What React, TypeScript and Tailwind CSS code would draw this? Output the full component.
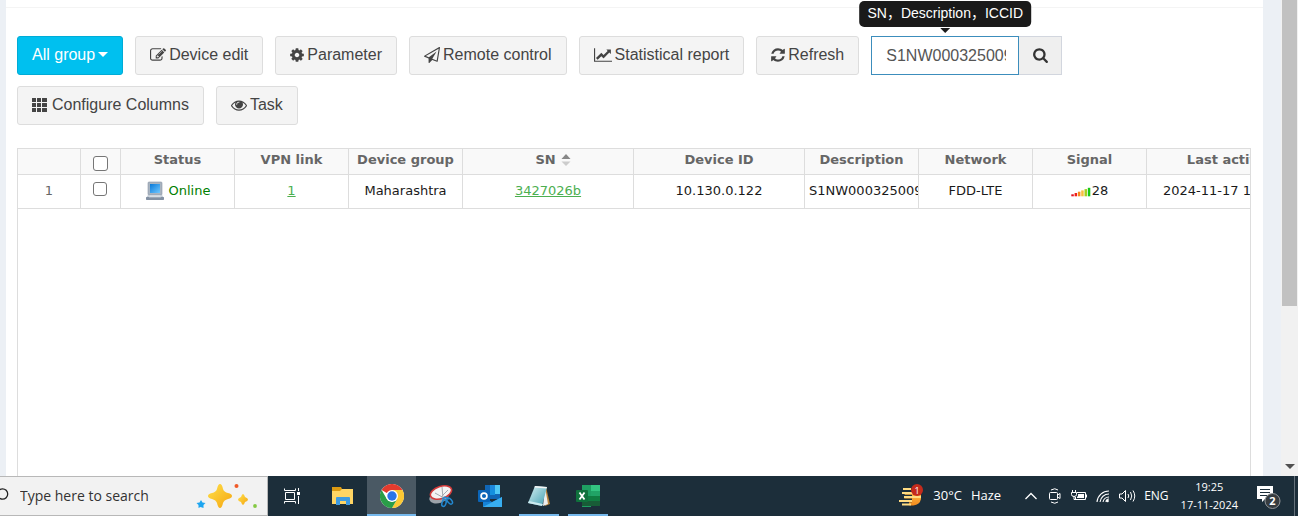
import React from 'react';

const paths = {
  edit: 'M888 1184l116-116-152-152-116 116v56h96v96h56zm440-720q-16-16-33 1l-350 350q-17 17-1 33t33-1l350-350q17-17 1-33zm80 594v190q0 119-84.5 203.5t-203.5 84.5h-832q-119 0-203.5-84.5t-84.5-203.5v-832q0-119 84.5-203.5t203.5-84.5h832q63 0 117 25 15 7 18 23 3 17-9 29l-49 49q-14 14-32 8-23-6-45-6h-832q-66 0-113 47t-47 113v832q0 66 47 113t113 47h832q66 0 113-47t47-113v-126q0-13 9-22l64-64q15-15 35-7t20 29zm-96-738l288 288-672 672h-288v-288zm444 132l-92 92-288-288 92-92q28-28 68-28t68 28l152 152q28 28 28 68t-28 68z',
  cog: 'M1152 896q0-106-75-181t-181-75-181 75-75 181 75 181 181 75 181-75 75-181zm512-109v222q0 12-8 23t-20 13l-185 28q-19 54-39 91 35 50 107 138 10 12 10 25t-9 23q-27 37-99 108t-94 71q-12 0-26-9l-138-108q-44 23-91 38-16 136-29 186-7 28-36 28h-222q-14 0-24.5-8.5t-11.5-21.5l-28-184q-49-16-90-37l-141 107q-10 9-25 9-14 0-25-11-126-114-165-168-7-10-7-23 0-12 8-23 15-21 51-66.5t54-70.5q-27-50-41-99l-183-27q-13-2-21-12.5t-8-23.5v-222q0-12 8-23t19-13l186-28q14-46 39-92-40-57-107-138-10-12-10-24 0-10 9-23 26-36 98.5-107.5t94.5-71.5q13 0 26 10l138 107q44-23 91-38 16-136 29-186 7-28 36-28h222q14 0 24.5 8.5t11.5 21.5l28 184q49 16 90 37l142-107q9-9 24-9 13 0 25 10 129 119 165 170 7 8 7 22 0 12-8 23-15 21-51 66.5t-54 70.5q26 50 41 98l183 28q13 2 21 12.5t8 23.5z',
  plane: 'M1764 11q33 24 27 64l-256 1536q-5 29-32 45-14 8-31 8-11 0-24-5l-527-215-298 327q-18 21-47 21-14 0-23-4-19-7-30-23.5t-11-36.5v-452l-472-193q-37-14-40-55-3-39 32-59l1664-960q35-21 68 2zm-342 1499l221-1323-1434 827 336 137 863-639-478 797z',
  chart: 'M2048 1536v128h-2048v-1536h128v1408h1920zm-128-1248v435q0 21-19.5 29.5t-35.5-7.5l-121-121-633 633q-10 10-23 10t-23-10l-233-233-416 416-192-192 585-585q10-10 23-10t23 10l233 233 464-464-121-121q-16-16-7.5-35.5t29.5-19.5h435q14 0 23 9t9 23z',
  refresh: 'M1639 1056q0 5-1 7-64 268-268 434.5t-478 166.5q-146 0-282.5-55t-243.5-157l-129 129q-19 19-45 19t-45-19-19-45v-448q0-26 19-45t45-19h448q26 0 45 19t19 45-19 45l-137 137q71 66 161 102t187 36q134 0 250-65t186-179q11-17 53-117 8-23 30-23h192q13 0 22.5 9.5t9.5 22.5zm25-800v448q0 26-19 45t-45 19h-448q-26 0-45-19t-19-45 19-45l138-138q-148-137-349-137-134 0-250 65t-186 179q-11 17-53 117-8 23-30 23h-199q-13 0-22.5-9.5t-9.5-22.5v-7q65-268 270-434.5t480-166.5q146 0 284 55.5t245 156.5l130-129q19-19 45-19t45 19 19 45z',
  search: 'M1216 832q0-185-131.5-316.5t-316.5-131.5-316.5 131.5-131.5 316.5 131.5 316.5 316.5 131.5 316.5-131.5 131.5-316.5zm512 832q0 52-38 90t-90 38q-54 0-90-38l-343-342q-179 124-399 124-143 0-273.5-55.5t-225-150-150-225-55.5-273.5 55.5-273.5 150-225 225-150 273.5-55.5 273.5 55.5 225 150 150 225 55.5 273.5q0 220-124 399l343 343q37 37 37 90z',
  eye: 'M1664 960q-152-236-381-353 61 104 61 225 0 185-131.5 316.5t-316.5 131.5-316.5-131.5-131.5-316.5q0-121 61-225-229 117-381 353 133 205 333.5 326.5t434.5 121.5 434.5-121.5 333.5-326.5zm-720-384q0-20-14-34t-34-14q-125 0-214.5 89.5t-89.5 214.5q0 20 14 34t34 14 34-14 14-34q0-86 61-147t147-61q20 0 34-14t14-34zm848 384q0 34-20 69-140 230-376.5 368.5t-499.5 138.5-499.5-139-376.5-368q-20-35-20-69t20-69q140-229 376.5-368t499.5-139 499.5 139 376.5 368q20 35 20 69z',
};

function Glyph({ d, box = '0 0 1792 1792', className = 'w-4' }: { d: string; box?: string; className?: string }) {
  return (
    <svg viewBox={box} className={`h-4 shrink-0 ${className}`} fill="currentColor" aria-hidden="true">
      <path d={d} />
    </svg>
  );
}

function ToolButton({ icon, children }: { icon: React.ReactNode; children: React.ReactNode }) {
  return (
    <button type="button" className="flex h-[39px] items-center gap-[3px] rounded-[3px] border border-[#ddd] bg-[#f4f4f4] px-[14px] pb-[2px] text-base text-[#444]">
      {icon}
      <span>{children}</span>
    </button>
  );
}

function Toolbar() {
  return (
    <div className="flex flex-wrap gap-x-3 gap-y-[11px] px-[11px] pt-7">
      <button type="button" className="flex h-[39px] items-center gap-[3px] rounded-[3px] border border-[#00acd6] bg-[#00c0ef] px-[14px] pb-[2px] text-base text-white">
        <span>All group</span>
        <svg viewBox="0 0 10 5" className="h-[5px] w-[10px]" fill="currentColor" aria-hidden="true"><path d="M0 0h10L5 5z" /></svg>
      </button>
      <ToolButton icon={<Glyph d={paths.edit} />}>Device edit</ToolButton>
      <ToolButton icon={<Glyph d={paths.cog} box="128 0 1536 1792" className="w-[14px]" />}>Parameter</ToolButton>
      <ToolButton icon={<Glyph d={paths.plane} />}>Remote control</ToolButton>
      <ToolButton icon={<Glyph d={paths.chart} box="0 0 2048 1792" className="w-[18px]" />}>Statistical report</ToolButton>
      <ToolButton icon={<Glyph d={paths.refresh} box="128 0 1536 1792" className="w-[14px]" />}>Refresh</ToolButton>
      <div className="relative flex h-[39px]">
        <input
          aria-label="SN, Description, ICCID"
          defaultValue="S1NW000325009"
          className="w-[148px] border border-[#3c8dbc] bg-white pr-3 pl-[14px] text-base text-[#555] outline-none"
        />
        <button type="button" aria-label="Search" className="flex w-[43px] items-center justify-center border border-l-0 border-[#d2d6de] bg-[#efefef] pb-[2px] text-[#333]">
          <Glyph d={paths.search} box="64 0 1664 1792" className="w-[15px]" />
        </button>
        <div role="tooltip" className="absolute bottom-[42px] left-[74px] flex -translate-x-1/2 flex-col items-center">
          <div className="h-[26px] rounded-[5px] bg-[#1a1a1a] px-2 text-sm leading-[25px] whitespace-nowrap text-white">SN，Description，ICCID</div>
          <svg viewBox="0 0 10 5" className="mt-px h-[5px] w-[10px]" fill="#1a1a1a" aria-hidden="true"><path d="M0 0h10L5 5z" /></svg>
        </div>
      </div>
      <ToolButton
        icon={
          <svg viewBox="0 0 17 16" className="h-4 w-[17px]" fill="currentColor" aria-hidden="true">
            {[0, 5, 10].map((y) => [0, 5, 10].map((x) => <rect key={`${x}-${y}`} x={x} y={y + 1} width={x === 10 ? 5 : 4} height="4" rx="0.3" />))}
          </svg>
        }
      >
        Configure Columns
      </ToolButton>
      <ToolButton icon={<Glyph d={paths.eye} />}>Task</ToolButton>
    </div>
  );
}

const columnWidths = [63, 40, 114, 114, 114, 171, 171, 114, 114, 114, 171];
const signalBars = ['#e01020', '#f02018', '#f58a1c', '#f8c040', '#a6d020', '#18c818'];

function Head({ children }: { children?: React.ReactNode }) {
  return <th scope="col" className="h-[26px] overflow-hidden border-r border-b border-[#ddd] p-0 align-top leading-[21px] font-bold whitespace-nowrap text-[#666]">{children}</th>;
}

function Cell({ children }: { children?: React.ReactNode }) {
  return <td className="h-[34px] overflow-hidden border-r border-b border-[#ddd] px-1 pt-0 pb-[2px] whitespace-nowrap">{children}</td>;
}

function Tick({ label, className }: { label: string; className: string }) {
  return <input type="checkbox" aria-label={label} className={`block appearance-none rounded-[3px] border border-[#767676] bg-white ${className}`} />;
}

function DeviceTable() {
  return (
    <div className="mr-3 ml-[11px] mt-[23px] min-h-0 flex-1 overflow-hidden border border-b-0 border-[#ddd]">
      <table className="w-[1300px] table-fixed border-separate border-spacing-0 text-center font-['Verdana','DejaVu_Sans',sans-serif] text-[13px] text-[#1a1a1a]">
        <colgroup>
          {columnWidths.map((width, i) => <col key={i} style={{ width }} />)}
        </colgroup>
        <thead className="bg-[#f9f9f9]">
          <tr>
            <Head />
            <Head><Tick label="Select all" className="mt-[7px] ml-3 size-[15px]" /></Head>
            <Head>Status</Head>
            <Head>VPN link</Head>
            <Head>Device group</Head>
            <Head>
              <span className="inline-flex items-center gap-[5px] pl-[10px]">
                SN
                <svg viewBox="0 0 10 13" className="h-[13px] w-[10px]" aria-hidden="true"><path d="M.5 6h9L5 1z" fill="#888" /><path d="M.5 8.500h9L5 13z" fill="#ccc" /></svg>
              </span>
            </Head>
            <Head>Device ID</Head>
            <Head>Description</Head>
            <Head>Network</Head>
            <Head>Signal</Head>
            <Head>Last activity</Head>
          </tr>
        </thead>
        <tbody>
          <tr>
            <Cell><span className="text-[#666]">1</span></Cell>
            <td className="border-r border-b border-[#ddd] p-0 align-top"><Tick label="Select device 1" className="mt-[7px] ml-3 size-[14px]" /></td>
            <Cell>
              <span className="inline-flex items-center gap-1 align-middle text-[#008000]">
                <svg viewBox="0 0 20 20" className="size-5" aria-hidden="true">
                  <defs>
                    <linearGradient id="lid" x1="0" y1="0" x2="1" y2="1"><stop offset="0" stopColor="#0878d8" /><stop offset="1" stopColor="#70c8ff" /></linearGradient>
                  </defs>
                  <rect x="3" y="1" width="14" height="13" rx="1" fill="#a9b4c0" stroke="#8995a5" strokeWidth=".6" />
                  <rect x="5" y="3" width="10" height="9" fill="url(#lid)" />
                  <path d="M3 14h14l2 3H1z" fill="#c5ced8" />
                  <rect x="1" y="16" width="18" height="3" rx=".7" fill="#8391a3" />
                  <path d="M5 15h10M4 16h12" stroke="#eef2f6" strokeWidth=".5" />
                </svg>
                Online
              </span>
            </Cell>
            <Cell><a href="#vpn" className="text-[#4caf50] underline">1</a></Cell>
            <Cell>Maharashtra</Cell>
            <Cell><a href="#device" className="text-[#4caf50] underline">3427026b</a></Cell>
            <Cell>10.130.0.122</Cell>
            <Cell>S1NW000325009</Cell>
            <Cell>FDD-LTE</Cell>
            <Cell>
              <span className="inline-flex items-center gap-px align-middle">
                <svg viewBox="0 0 20 10" className="mt-[2px] h-[10px] w-5" aria-hidden="true">
                  {signalBars.map((color, i) => <rect key={color} x={i * 3.3 + 0.3} y={7.3 - i * 1.3} width="2.5" height={2 + i * 1.3} fill={color} />)}
                </svg>
                28
              </span>
            </Cell>
            <Cell>2024-11-17 19:25:05</Cell>
          </tr>
        </tbody>
      </table>
    </div>
  );
}

function TaskApp({ label, active, open, children }: { label: string; active?: boolean; open?: boolean; children: React.ReactNode }) {
  return (
    <button type="button" aria-label={label} className={`flex h-10 w-[49px] shrink-0 flex-col items-center ${active ? 'bg-[#4a5964]' : ''}`}>
      <span className="flex h-[38px] items-center pt-[2px]">{children}</span>
      <span className={`h-[2px] ${active ? 'w-full' : 'w-10'} ${active || open ? 'bg-[#76b9ed]' : ''}`} />
    </button>
  );
}

function TaskbarApps() {
  return (
    <div className="ml-px flex">
      <TaskApp label="Task view">
        <svg viewBox="0 0 18 16" className="mr-[3px] h-4 w-[18px]" fill="none" stroke="#fff" aria-hidden="true">
          <path d="M2.5 4.500h9v7h-9zM1.500 0.500v2h11v-2M1.500 15.500v-2h11v2M15.500 0v3M15.500 8v8" />
          <rect x="14" y="4" width="3" height="3" fill="#fff" stroke="none" />
        </svg>
      </TaskApp>
      <TaskApp label="File Explorer">
        <svg viewBox="0 0 24 20" className="h-5 w-6" aria-hidden="true">
          <path d="M1 1h9l1 2h11v4H1z" fill="#dd9b12" /><path d="M1 5h8l2-2h11v15H1z" fill="#ffd564" />
          <path d="M5 19v-7q0-1 1-1h12q1 0 1 1v7h-4v-4H9v4z" fill="#3f9be0" />
        </svg>
      </TaskApp>
      <TaskApp label="Chrome" active>
        <svg viewBox="0 0 24 24" className="size-6" aria-hidden="true">
          <circle cx="12" cy="12" r="12" fill="#fff" />
          <path d="M12 12L1.600 6A12 12 0 0 1 22.400 6H12z" fill="#e33b2e" />
          <path d="M22.400 6A12 12 0 0 1 12 24l5.200-9L12 6z" fill="#fcc934" />
          <path d="M12 24A12 12 0 0 1 1.600 6l5.200 9 5.200 3 5.200-3z" fill="#2a9d48" />
          <circle cx="12" cy="12" r="6" fill="#fff" /><circle cx="12" cy="12" r="4.700" fill="#2b74e8" />
        </svg>
      </TaskApp>
      <TaskApp label="Snipping Tool">
        <svg viewBox="0 0 26 24" className="h-6 w-[26px]" fill="none" aria-hidden="true">
          <ellipse cx="11" cy="13" rx="10" ry="6" transform="rotate(-18 11 13)" fill="#9da3aa" />
          <ellipse cx="13" cy="8.500" rx="11" ry="6" transform="rotate(-18 13 8.500)" fill="#f3f3f3" stroke="#d33a3a" strokeWidth="1.500" />
          <path d="M14 3l1 11M20 6l-7 7M7 9l9 5" stroke="#a3a9af" strokeWidth="1" />
          <path d="M14 15l3-2 4 2" stroke="#2388d0" strokeWidth="1.500" />
          <ellipse cx="16" cy="19" rx="2" ry="3.500" transform="rotate(18 16 19)" stroke="#2388d0" strokeWidth="1.500" />
          <ellipse cx="21.500" cy="17.500" rx="2" ry="3.500" transform="rotate(-40 21 17)" stroke="#2388d0" strokeWidth="1.500" />
        </svg>
      </TaskApp>
      <TaskApp label="Outlook">
        <svg viewBox="0 0 24 22" className="h-[22px] w-6" aria-hidden="true">
          <path d="M7 0h15v14H7z" fill="#1066b5" /><path d="M12 0h5v5h-5z" fill="#1c88dc" /><path d="M17 0h5v9h-5z" fill="#4fc8f5" /><path d="M12 5h5v5h-5z" fill="#1490df" />
          <path d="M5 12l9 5 10-5v10H5z" fill="#1683d8" /><path d="M5 22l19-10v10z" fill="#38aef0" /><rect y="5" width="12" height="12" rx="1" fill="#0a65b8" />
          <circle cx="6" cy="11" r="2.900" fill="none" stroke="#fff" strokeWidth="1.700" />
        </svg>
      </TaskApp>
      <TaskApp label="Notepad" open>
        <svg viewBox="0 0 24 24" className="size-6" aria-hidden="true">
          <defs><linearGradient id="note" x1="0" y1="0" x2="1" y2="1"><stop stopColor="#d9f1f4" /><stop offset="1" stopColor="#3e9eb0" /></linearGradient></defs>
          <path d="M19 3l4 17-5 2z" fill="#b8843c" /><path d="M18 3l3 17-5 2z" fill="#eee" /><path d="M8 2l12 1-5 19-14-3z" fill="url(#note)" /><path d="M8 2l12 1-.5 1.500L7.400 3.500z" fill="#f4f4f4" />
          <path d="M1 19l14 3 1-2L2 17z" fill="#cbeaf0" />
        </svg>
      </TaskApp>
      <TaskApp label="Excel" open>
        <svg viewBox="0 0 24 22" className="h-[22px] w-6" aria-hidden="true">
          <path d="M6 0h9v22H6z" fill="#1e9e62" /><path d="M15 0h9v6h-9z" fill="#33c481" /><path d="M15 6h9v5h-9z" fill="#21a366" /><path d="M6 11h18v5H6z" fill="#107c41" /><path d="M6 16h18v5H6z" fill="#185c37" />
          <rect y="5" width="12" height="12" rx="1" fill="#0f713c" /><path d="M3.500 7.500l5 7M8.500 7.500l-5 7" stroke="#fff" strokeWidth="1.800" />
        </svg>
      </TaskApp>
    </div>
  );
}

function Tray() {
  return (
    <div className="ml-auto flex items-center text-white">
      <button type="button" className="mr-[23px] flex items-center gap-[9px] text-[13px] whitespace-nowrap">
        <svg viewBox="0 0 26 26" className="size-[26px]" aria-hidden="true">
          <defs><linearGradient id="haze" x1="0" y1="0" x2="0" y2="1"><stop stopColor="#ffc04a" /><stop offset="1" stopColor="#f28a1c" /></linearGradient></defs>
          <path d="M7 8h16v8a9 8 0 0 1-17 2z" fill="url(#haze)" />
          <path d="M9 6h3M4 9h13M5 13.500h9M1 17.500h13M5 21h6" stroke="#1c2e3a" strokeWidth="3.600" />
          <path d="M5 6h8M4 10h13M6 14h17M1 18h13M4 21.500h9" stroke="#ffdc82" strokeWidth="1.800" />
          <circle cx="19" cy="7" r="6" fill="#c42b1c" />
          <text x="19" y="10.500" textAnchor="middle" fontSize="9" fill="#fff">1</text>
        </svg>
        <span>30°C</span>
        <span>Haze</span>
      </button>
      <div className="flex items-center gap-2">
        <svg viewBox="0 0 14 16" className="mr-[2px] h-4 w-[14px]" fill="none" stroke="#fff" strokeWidth="1.300" aria-label="Show hidden icons"><path d="M1.500 11L7 5.500 12.500 11" /></svg>
        <svg viewBox="0 0 14 16" className="h-4 w-[14px]" fill="none" stroke="#fff" aria-label="Camera"><rect x="1.500" y="4.500" width="8" height="7" rx="1" /><path d="M9.500 7l2.500-1.500v5l-2.500-1.500M3 2Q7-.5 10 2M3 14q4 2.500 7 0" /></svg>
        <svg viewBox="0 0 17 16" className="h-4 w-[17px]" fill="none" stroke="#fff" aria-label="Battery"><path d="M2.500 2v3M5.500 2v3M1.500 4.500h5v2q0 2-2.500 2t-2.500-2zM4 8v3.500h3" /><path d="M7 4.500h8.500v7H5.500V9M16.500 6.500v3" /><path d="M8 6h6v4H7V8.500h1z" fill="#fff" stroke="none" /></svg>
        <svg viewBox="0 0 16 16" className="h-4 w-4" fill="none" stroke="#fff" strokeWidth="1.100" aria-label="Wireless"><path d="M2 14A12 12 0 0 1 14 3M5 14a9 9 0 0 1 9-8M8 14a6 6 0 0 1 6-5M11 14a3 3 0 0 1 3-3" /><circle cx="12.500" cy="13" r="1.300" fill="#fff" stroke="none" /></svg>
        <svg viewBox="0 0 17 16" className="h-4 w-[17px]" fill="none" stroke="#fff" aria-label="Volume"><path d="M.5 6h2.500l3.500-3.500v11L3 10H.5zM9 6q1.500 2 0 4M11.500 4q2.500 4 0 8M14 2.500q3.500 5.500 0 11" /></svg>
        <span className="text-[12px]">ENG</span>
      </div>
      <time className="ml-3 text-center text-[11px] leading-[18px] whitespace-nowrap">
        <span className="block">19:25</span>
        <span className="block">17-11-2024</span>
      </time>
      <button type="button" aria-label="Notifications" className="mr-3 ml-[18px]">
        <svg viewBox="0 0 26 26" className="size-[26px]" aria-hidden="true">
          <path d="M1 3h16v13H9l-3 3v-3H1z" fill="#fff" /><path d="M4 6.500h10M4 9.500h10M4 12.500h7" stroke="#1c2e3a" />
          <circle cx="16.500" cy="18" r="7.500" fill="#363c40" stroke="#929699" />
          <text x="16.500" y="22" textAnchor="middle" fontSize="11" fontWeight="bold" fill="#fff">2</text>
        </svg>
      </button>
      <span className="mr-[3px] h-10 w-px bg-[#65717a]" />
    </div>
  );
}

function Taskbar() {
  return (
    <footer className="flex h-10 shrink-0 bg-[#1c2e3a] font-['Segoe_UI','Open_Sans',sans-serif]">
      <label className="flex w-[268px] shrink-0 items-center border border-l-0 border-[#b8b8b8] bg-[#f2f2f2]">
        <svg viewBox="0 0 9 16" className="h-4 w-[9px]" fill="none" stroke="#222" strokeWidth="1.300" aria-hidden="true"><circle cx="2.500" cy="6" r="5.200" /></svg>
        <input placeholder="Type here to search" aria-label="Type here to search" className="ml-[11px] w-[170px] bg-transparent text-sm text-[#333] outline-none placeholder:text-[#333]" />
        <svg viewBox="0 0 68 26" className="h-[26px] w-[68px]" aria-hidden="true">
          <defs><linearGradient id="spark" x1="0" y1="0" x2="1" y2="1"><stop stopColor="#ffe04a" /><stop offset="1" stopColor="#f5a510" /></linearGradient></defs>
          <path d="M30 1q2 0 3 5 1 3 5 4 4 1 4 3t-4 3q-4 1-5 4-1 5-3 5t-3-5q-1-3-5-4-4-1-4-3t4-3q4-1 5-4 1-5 3-5z" fill="url(#spark)" />
          <path d="M53 11q1 0 2 3 3 1 3 2.500T55 19q-1 3-2 3t-2-3q-3-1-3-2.500t3-2.500q1-3 2-3z" fill="url(#spark)" />
          <path d="M11 17l1.500 2.500 3 .5-2 2v3l-3-1-2 1v-3l-2-2 3-.5z" fill="#1da5f0" /><circle cx="46.500" cy="3" r="2" fill="#f05a28" />
          <circle cx="65" cy="23" r="1.900" fill="#84c943" />
        </svg>
      </label>
      <TaskbarApps />
      <Tray />
    </footer>
  );
}

export default function App() {
  return (
    <div className="flex h-screen flex-col overflow-hidden bg-[#ecf0f5] font-['Liberation_Sans','Noto_Sans_CJK_SC',sans-serif]">
      <div className="flex min-h-0 flex-1">
        <main className="mr-[18px] ml-[6px] flex min-w-0 flex-1 flex-col bg-white">
          <div className="h-2 shrink-0 border-b border-[#f4f4f4]" />
          <Toolbar />
          <DeviceTable />
        </main>
        <div className="flex w-[17px] shrink-0 flex-col items-center justify-between bg-[#f1f1f1] pb-[7px]">
          <div className="h-[306px] w-[15px] bg-[#c1c1c1]" />
          <svg viewBox="0 0 10 5" className="h-[5px] w-[10px]" fill="#505050" aria-hidden="true"><path d="M0 0h10L5 5z" /></svg>
        </div>
      </div>
      <Taskbar />
    </div>
  );
}
